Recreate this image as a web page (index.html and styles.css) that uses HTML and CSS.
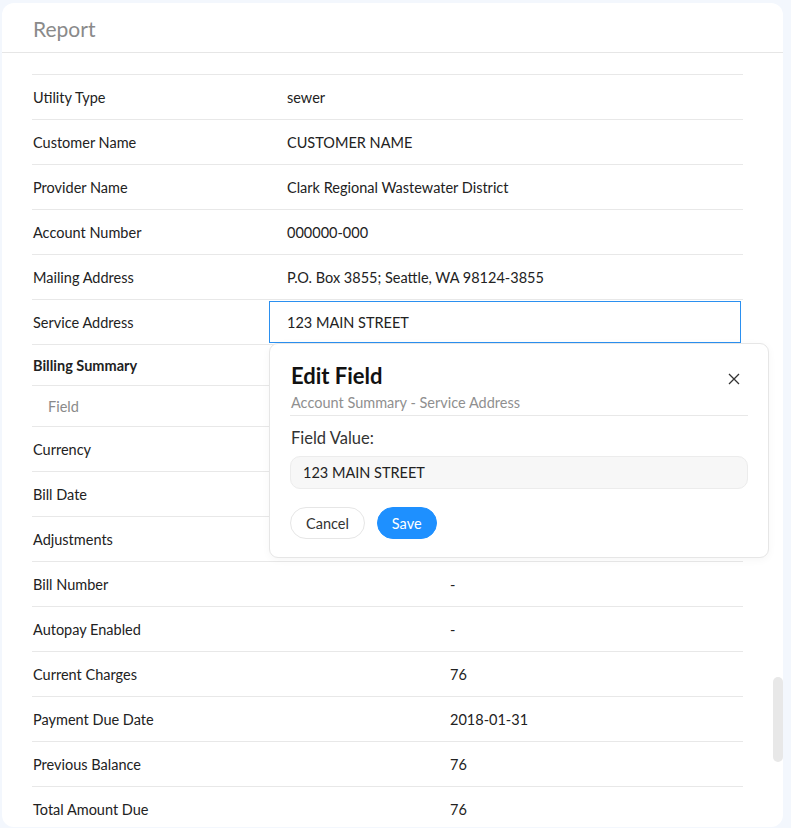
FILE: index.html
```html
<!DOCTYPE html>
<html>
<head>
<meta charset="utf-8">
<link rel="stylesheet" href="styles.css">
</head>
<body>
<div class="card">
  <div class="card-header">Report</div>
  <div class="card-body">
    <div class="table">
      <div class="row"><div class="label">Utility Type</div><div class="value">sewer</div></div>
      <div class="row"><div class="label">Customer Name</div><div class="value">CUSTOMER NAME</div></div>
      <div class="row"><div class="label">Provider Name</div><div class="value">Clark Regional Wastewater District</div></div>
      <div class="row"><div class="label">Account Number</div><div class="value">000000-000</div></div>
      <div class="row"><div class="label">Mailing Address</div><div class="value">P.O. Box 3855; Seattle, WA 98124-3855</div></div>
      <div class="row"><div class="label">Service Address</div><div class="value editing"><div class="edit-box">123 MAIN STREET</div></div></div>
    </div>
    <div class="section-title">Billing Summary</div>
    <div class="table billing">
      <div class="row head"><div class="label">Field</div><div class="value"></div></div>
      <div class="row"><div class="label">Currency</div><div class="value"></div></div>
      <div class="row"><div class="label">Bill Date</div><div class="value"></div></div>
      <div class="row"><div class="label">Adjustments</div><div class="value"></div></div>
      <div class="row"><div class="label">Bill Number</div><div class="value">-</div></div>
      <div class="row"><div class="label">Autopay Enabled</div><div class="value">-</div></div>
      <div class="row"><div class="label">Current Charges</div><div class="value">76</div></div>
      <div class="row"><div class="label">Payment Due Date</div><div class="value">2018-01-31</div></div>
      <div class="row"><div class="label">Previous Balance</div><div class="value">76</div></div>
      <div class="row"><div class="label">Total Amount Due</div><div class="value">76</div></div>
    </div>
  </div>
  <div class="popover">
    <div class="pop-head">
      <div class="pop-title">Edit Field</div>
      <button class="pop-close" aria-label="Close">
        <svg width="12" height="12" viewBox="0 0 12 12"><path d="M1 1 L11 11 M11 1 L1 11" stroke="#333" stroke-width="1.3" fill="none"/></svg>
      </button>
    </div>
    <div class="pop-sub">Account Summary - Service Address</div>
    <div class="pop-label">Field Value:</div>
    <div class="pop-input">123 MAIN STREET</div>
    <div class="pop-actions">
      <button class="btn btn-cancel">Cancel</button>
      <button class="btn btn-save">Save</button>
    </div>
  </div>
  <div class="scroll-thumb"></div>
</div>
</body>
</html>
```
FILE: styles.css
```css
html, body {
  margin: 0;
  padding: 0;
  background: #f3f7fd;
}
body {
  font-family: "Lato", "Noto Sans", sans-serif;
  font-size: 14.5px;
  color: #222;
  padding: 3px 8px 0 2px;
  height: 828px;
  box-sizing: border-box;
  overflow: hidden;
}
.card {
  position: relative;
  background: #fff;
  border-radius: 12px;
  height: 824px;
  overflow: hidden;
}
.card-header {
  height: 49px;
  border-bottom: 1px solid #e6e6e6;
  padding-left: 31px;
  font-size: 21px;
  color: #8a8a8a;
  line-height: 51px;
}
.card-body {
  padding: 21px 40px 0 30px;
}
.table {
  border-top: 1px solid #e8e8e8;
}
.row {
  display: grid;
  grid-template-columns: 237px 1fr;
  height: 45px;
  box-sizing: border-box;
  border-bottom: 1px solid #e8e8e8;
  align-items: center;
}
.label {
  padding-left: 1px;
}
.value {
  padding-left: 18px;
}
.value.editing {
  align-self: stretch;
  display: flex;
  padding: 1px 2px 1px 0;
}
.edit-box {
  flex: 1;
  border: 1px solid #2b90f0;
  padding-left: 17px;
  display: flex;
  align-items: center;
}
.section-title {
  height: 40px;
  line-height: 42px;
  font-weight: bold;
  padding-left: 1px;
  border-bottom: 1px solid #e8e8e8;
}
.billing {
  border-top: none;
}
.billing .row {
  grid-template-columns: 402px 1fr;
}
.billing .value {
  padding-left: 16px;
}
.billing .row.head {
  height: 41px;
  color: #8a8a8a;
}
.billing .row.head .label {
  padding-left: 16px;
}
.popover {
  position: absolute;
  left: 267px;
  top: 340px;
  width: 500px;
  height: 215px;
  box-sizing: border-box;
  background: #fff;
  border: 1px solid #e6e6e6;
  border-radius: 9px;
  box-shadow: 0 2px 8px rgba(0,0,0,0.04);
  padding: 18px 20px 0 20px;
}
.pop-head {
  display: flex;
  justify-content: space-between;
  align-items: center;
}
.pop-title {
  font-size: 22px;
  font-weight: bold;
  color: #111;
  line-height: 28px;
  padding-left: 1px;
}
.pop-close {
  background: none;
  border: none;
  padding: 0;
  margin: 6px 8px 0 0;
  display: flex;
  cursor: pointer;
}
.pop-sub {
  color: #8f8f8f;
  font-size: 14.5px;
  line-height: 18px;
  margin-top: 4px;
  padding-bottom: 3px;
  padding-left: 1px;
  border-bottom: 1px solid #e8e8e8;
  margin-bottom: 12px;
}
.pop-label {
  font-size: 16.5px;
  color: #333;
  line-height: 20px;
  margin-bottom: 8px;
  padding-left: 1px;
}
.pop-input {
  height: 33px;
  box-sizing: border-box;
  background: #f7f7f7;
  border: 1px solid #ececec;
  border-radius: 10px;
  padding-left: 12px;
  display: flex;
  align-items: center;
  color: #222;
}
.pop-actions {
  display: flex;
  gap: 12px;
  margin-top: 18px;
}
.btn {
  font-family: inherit;
  font-size: 14.5px;
  height: 32px;
  border-radius: 16px;
  padding: 0 15px;
  cursor: pointer;
}
.btn-cancel {
  background: #fff;
  border: 1px solid #e6e6e6;
  color: #333;
}
.btn-save {
  background: #1e90ff;
  border: 1px solid #1e90ff;
  color: #fff;
  padding: 0 14px;
}
.scroll-thumb {
  position: absolute;
  right: 0;
  top: 674px;
  width: 10px;
  height: 85px;
  border-radius: 5px;
  background: #e8e8e8;
}
```
